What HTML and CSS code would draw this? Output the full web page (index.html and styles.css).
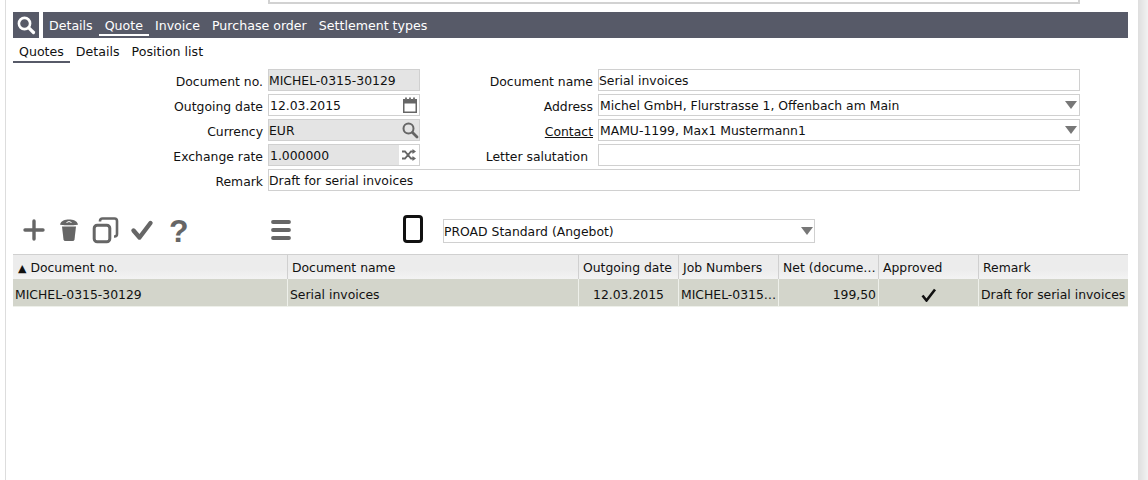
FILE: index.html
```html
<!DOCTYPE html>
<html lang="en">
<head>
<meta charset="utf-8">
<title>Quotes</title>
<link rel="stylesheet" href="styles.css">
</head>
<body>
<div class="frame">
  <main class="content">
    <div class="top-row"><div class="top-input"></div></div>
    <nav class="mainbar">
      <div class="search-tile">
        <svg width="20" height="20" viewBox="0 0 20 20"><circle cx="8.5" cy="8.5" r="5.6" fill="none" stroke="#fff" stroke-width="2.6"/><path d="M12.8 12.8L17.5 17.5" stroke="#fff" stroke-width="3.2" stroke-linecap="round"/></svg>
      </div>
      <div class="maintabs">
        <span class="maintab">Details</span>
        <span class="maintab active">Quote</span>
        <span class="maintab">Invoice</span>
        <span class="maintab">Purchase order</span>
        <span class="maintab">Settlement types</span>
      </div>
    </nav>
    <nav class="subtabs">
      <span class="subtab active">Quotes</span>
      <span class="subtab">Details</span>
      <span class="subtab">Position list</span>
    </nav>
    <form class="form">
      <label class="lbl">Document no.</label>
      <div class="field grey">MICHEL-0315-30129</div>
      <label class="lbl">Document name</label>
      <div class="field">Serial invoices</div>

      <label class="lbl">Outgoing date</label>
      <div class="field shift">12.03.2015
        <svg class="ficon" width="18" height="18" viewBox="0 0 18 18"><path d="M2 3h14v14H2z" fill="#666"/><path d="M3.5 7.5h11v8h-11z" fill="#fff"/><path d="M4 1.5h2v2H4zM8 1.5h2v2H8zM12 1.5h2v2h-2z" fill="#777"/></svg>
      </div>
      <label class="lbl">Address</label>
      <div class="field shift">Michel GmbH, Flurstrasse 1, Offenbach am Main<span class="caret"></span></div>

      <label class="lbl">Currency</label>
      <div class="field grey">EUR
        <svg class="ficon" width="18" height="18" viewBox="0 0 18 18"><circle cx="7.5" cy="7.5" r="5" fill="none" stroke="#666" stroke-width="2"/><path d="M11.5 11.5l4.5 4.5" stroke="#666" stroke-width="2.8" stroke-linecap="round"/></svg>
      </div>
      <label class="lbl"><u>Contact</u></label>
      <div class="field shift">MAMU-1199, Max1 Mustermann1<span class="caret"></span></div>

      <label class="lbl">Exchange rate</label>
      <div class="field grey shift">1.000000
        <span class="icon-cell"><svg width="14" height="12" viewBox="0 0 14 12"><path d="M0 2.5h3l6 7h2M0 9.5h3l6-7h2" fill="none" stroke="#666" stroke-width="1.8"/><path d="M10.5 0l3.5 2.5-3.5 2.5zM10.5 7l3.5 2.5-3.5 2.5z" fill="#666"/></svg></span>
      </div>
      <label class="lbl inset">Letter salutation</label>
      <div class="field"></div>

      <label class="lbl">Remark</label>
      <div class="field wide">Draft for serial invoices</div>
    </form>
    <div class="toolbar">
      <div class="tools">
        <svg class="tool" width="24" height="30" viewBox="0 1 24 30"><path d="M12 6v18M3 15h18" stroke="#666" stroke-width="3.4" stroke-linecap="round"/></svg>
        <svg class="tool" width="24" height="30" viewBox="0 1 24 30"><path d="M5 11.500h14l-1.500 13q-.2 1.500-2 1.500h-7q-1.800 0-2-1.500z" fill="#666"/><path d="M3 9.500c1-4 5-5 9-5s8 1 9 5c-1 1-17 1-18 0z" fill="#666"/><path d="M9.500 7.500l2.500-1 2.500 1" fill="none" stroke="#fff"/></svg>
        <svg class="tool" width="28" height="30" viewBox="0 1 28 30"><rect x="2.200" y="10.200" width="15.600" height="16.600" rx="3" fill="none" stroke="#666" stroke-width="3"/><path d="M8 6.500V6q0-2.500 2.500-2.500h12q2.500 0 2.500 2.500v13q0 2.500-2.500 2.500H22" fill="none" stroke="#666" stroke-width="2.600"/></svg>
        <svg class="tool" width="26" height="30" viewBox="0 1 26 30"><path d="M3.500 15.500l6 7 11-14.500" fill="none" stroke="#666" stroke-width="4.400" stroke-linecap="round" stroke-linejoin="round"/></svg>
        <span class="help">?</span>
      </div>
      <svg class="menu" width="24" height="30" viewBox="0 1 24 30"><path d="M4 7h16M4 15h16M4 23h16" stroke="#666" stroke-width="3.800" stroke-linecap="round"/></svg>
      <svg class="device" width="24" height="30" viewBox="0 0 24 30"><rect x="3.500" y="2.500" width="17" height="25" rx="2.500" fill="none" stroke="#111" stroke-width="3"/></svg>
      <div class="field select">PROAD Standard (Angebot)<span class="caret"></span></div>
    </div>
    <table class="grid">
      <colgroup>
        <col class="c1"><col class="c2"><col class="c3"><col class="c3"><col class="c3"><col class="c3"><col>
      </colgroup>
      <thead>
        <tr>
          <th><span class="sort">▲</span> Document no.</th>
          <th>Document name</th>
          <th>Outgoing date</th>
          <th>Job Numbers</th>
          <th>Net (docume…</th>
          <th>Approved</th>
          <th>Remark</th>
        </tr>
      </thead>
      <tbody>
        <tr>
          <td>MICHEL-0315-30129</td>
          <td>Serial invoices</td>
          <td class="center">12.03.2015</td>
          <td>MICHEL-0315…</td>
          <td class="right">199,50</td>
          <td class="center"><svg width="16" height="14" viewBox="0 0 16 14"><path d="M1.500 7.500l4 5 8.500-11" fill="none" stroke="#111" stroke-width="2.600"/></svg></td>
          <td>Draft for serial invoices</td>
        </tr>
      </tbody>
    </table>
  </main>
  <aside class="rail"></aside>
</div>
</body>
</html>
```
FILE: styles.css
```css
* { box-sizing: border-box; }
html, body { margin: 0; height: 100%; overflow: hidden; background: #fff; }
body { font-family: "DejaVu Sans", Verdana, sans-serif; font-size: 12.4px; color: #111; }
.frame { display: flex; height: 480px; padding-left: 5px; }
.content { flex: 1; border-left: 1px solid #ddd; padding-left: 7px; padding-right: 10px; min-width: 0; }
.rail { width: 10px; background: linear-gradient(to right, #dedede, #f2f2f2); }

.top-row { height: 12px; padding-left: 255px; padding-right: 48px; }
.top-input { height: 4px; border: 2px solid #d2d2d2; border-top: 0; }

.mainbar { display: flex; gap: 4px; height: 26px; }
.search-tile { width: 26px; background: #575a68; display: flex; align-items: center; justify-content: center; }
.maintabs { flex: 1; background: #575a68; display: flex; color: #fff; font-size: 12.6px; }
.maintab { padding: 0 6px; line-height: 28px; height: 24px; }
.maintab.active { border-bottom: 2px solid #fff; }

.subtabs { display: flex; height: 25px; font-size: 12.6px; }
.subtab { padding: 0 6px; line-height: 28px; height: 25px; }
.subtab.active { border-bottom: 2px solid #575a68; }

.form { display: grid; grid-template-columns: 250px 152px 168px 482px; column-gap: 5px; row-gap: 3px; margin-top: 6px; grid-auto-rows: 22px; width: 1067px; }
.lbl { text-align: right; line-height: 25px; white-space: nowrap; }
.inset { padding-right: 5px; }
.field { position: relative; height: 22px; border: 1px solid #d0d0d0; background: #fff; line-height: 21px; white-space: nowrap; }
.field.shift { padding-left: 1px; }
.field.grey { background: #e4e4e4; }
.field.wide { grid-column: 2 / 5; }
.ficon { position: absolute; right: 0; top: 1px; }
.icon-cell { position: absolute; right: 0; top: 0; width: 20px; height: 20px; background: #fff; display: flex; align-items: center; justify-content: center; }
.caret { position: absolute; right: 2px; top: 6px; width: 0; height: 0; border-left: 6px solid transparent; border-right: 6px solid transparent; border-top: 8px solid #777; }

.toolbar { display: flex; align-items: center; margin-top: 24px; height: 32px; padding-left: 9px; }
.tools { display: flex; align-items: center; width: 247px; gap: 11px; }
.tool { display: block; }
.help { font: bold 32px/30px "Liberation Sans", sans-serif; color: #666; margin-left: 2px; }
.tool + .tool + .tool + .tool { margin-left: -1px; }
.menu { margin-right: 108px; }
.device { margin-right: 18px; margin-bottom: 4px; }
.select { width: 372px; height: 24px; line-height: 23px; }
.select .caret { right: 1px; top: 7px; }

.grid { border-collapse: separate; border-spacing: 0; table-layout: fixed; width: 1115px; margin-top: 7px; }
.c1 { width: 275px; }
.c2 { width: 291px; }
.c3 { width: 100px; }
.grid th { height: 25px; font-weight: normal; text-align: left; padding: 2px 3px 0 4px; white-space: nowrap; overflow: hidden; border-top: 1px solid #d0d0d0; border-right: 1px solid #d0d0d0; background: linear-gradient(to bottom, #ececec 0 60%, #f3f3f3 100%); line-height: 22px; }
.grid th:first-child { padding-left: 5px; }
.grid th:last-child { border-right: 0; }
.sort { font-size: 11px; line-height: 1; }
.grid td { height: 28px; background: #d3d5cb; padding: 4px 2px 0 2px; white-space: nowrap; overflow: hidden; border-right: 1px solid #eef0ea; border-bottom: 1px solid #eef0ea; }
.grid td:last-child { border-right: 0; }
.center { text-align: center; }
.right { text-align: right; }
.center svg { display: block; margin: 0 auto; }
```
